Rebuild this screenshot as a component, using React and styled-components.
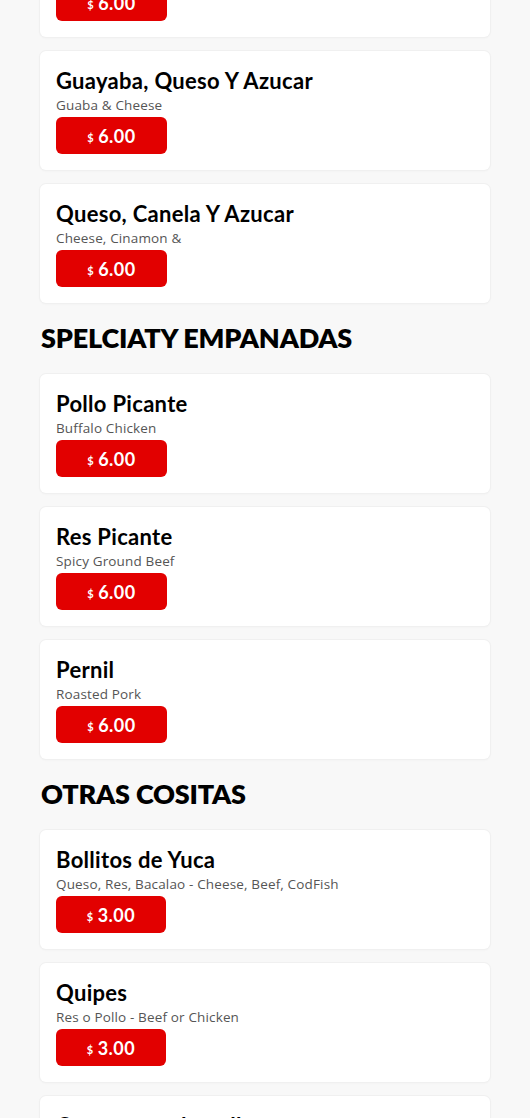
import React from 'react';
import styled, { createGlobalStyle } from 'styled-components';

const red = 'rgb(226, 0, 0)';
const pageBg = 'rgb(248, 248, 248)';

const GlobalStyle = createGlobalStyle`
  html, body {
    margin: 0;
    padding: 0;
    background: ${pageBg};
    font-family: Lato, "Open Sans", sans-serif;
    overflow: hidden;
  }
`;

const Page = styled.div`
  padding: 0 40px;
  margin-top: -82px;
  display: flex;
  flex-direction: column;
`;

const Section = styled.section`
  display: flex;
  flex-direction: column;
  gap: 14px;
`;

const Heading = styled.h2`
  margin: 17px 0 18px 1px;
  font-size: 27px;
  line-height: 36px;
  font-weight: 800;
  letter-spacing: -0.2px;
  color: #000;
`;

const Card = styled.article`
  background: #fff;
  border-radius: 6px;
  box-shadow: 0 0 0 1px rgb(240, 240, 240), 0 1px 3px rgba(0, 0, 0, 0.04);
  padding: 16px;
  display: flex;
  flex-direction: column;
  align-items: flex-start;
`;

const Title = styled.h3`
  margin: 0;
  font-size: 22px;
  line-height: 28px;
  font-weight: 700;
  letter-spacing: 0.3px;
  color: #000;
`;

const Desc = styled.p`
  margin: 0 0 2px;
  font-family: "Open Sans", sans-serif;
  font-size: 13.5px;
  line-height: 20px;
  letter-spacing: 0.15px;
  color: rgb(85, 85, 85);
`;

const Price = styled.button`
  border: none;
  background: ${red};
  color: #fff;
  border-radius: 6px;
  height: 37px;
  width: ${props => props.w || 111}px;
  display: flex;
  align-items: center;
  justify-content: center;
  gap: 4px;
  font-family: Lato, sans-serif;
  font-weight: 700;
  font-size: 18px;
  letter-spacing: 0.5px;
  padding: 0;

  span {
    font-size: 11px;
    margin-top: 4px;
  }
`;

const sections = [
  {
    items: [
      { name: 'Pollo', desc: 'Chicken', price: '6.00' },
      { name: 'Guayaba, Queso Y Azucar', desc: 'Guaba & Cheese', price: '6.00' },
      { name: 'Queso, Canela Y Azucar', desc: 'Cheese, Cinamon &', price: '6.00' },
    ],
  },
  {
    title: 'SPELCIATY EMPANADAS',
    items: [
      { name: 'Pollo Picante', desc: 'Buffalo Chicken', price: '6.00' },
      { name: 'Res Picante', desc: 'Spicy Ground Beef', price: '6.00' },
      { name: 'Pernil', desc: 'Roasted Pork', price: '6.00' },
    ],
  },
  {
    title: 'OTRAS COSITAS',
    items: [
      { name: 'Bollitos de Yuca', desc: 'Queso, Res, Bacalao - Cheese, Beef, CodFish', price: '3.00', w: 110 },
      { name: 'Quipes', desc: 'Res o Pollo - Beef or Chicken', price: '3.00', w: 110 },
      { name: 'Camarones de pollo', desc: 'Shrimp', price: '3.00', w: 110 },
    ],
  },
];

const App = () => (
  <>
    <GlobalStyle />
    <Page>
      {sections.map((sec, i) => (
        <React.Fragment key={`sec-${i}`}>
          {sec.title ? <Heading>{sec.title}</Heading> : null}
          <Section>
            {sec.items.map(item => (
              <Card key={item.name}>
                <Title>{item.name}</Title>
                <Desc>{item.desc}</Desc>
                <Price w={item.w}><span>$</span>{item.price}</Price>
              </Card>
            ))}
          </Section>
        </React.Fragment>
      ))}
    </Page>
  </>
);

export default App;
